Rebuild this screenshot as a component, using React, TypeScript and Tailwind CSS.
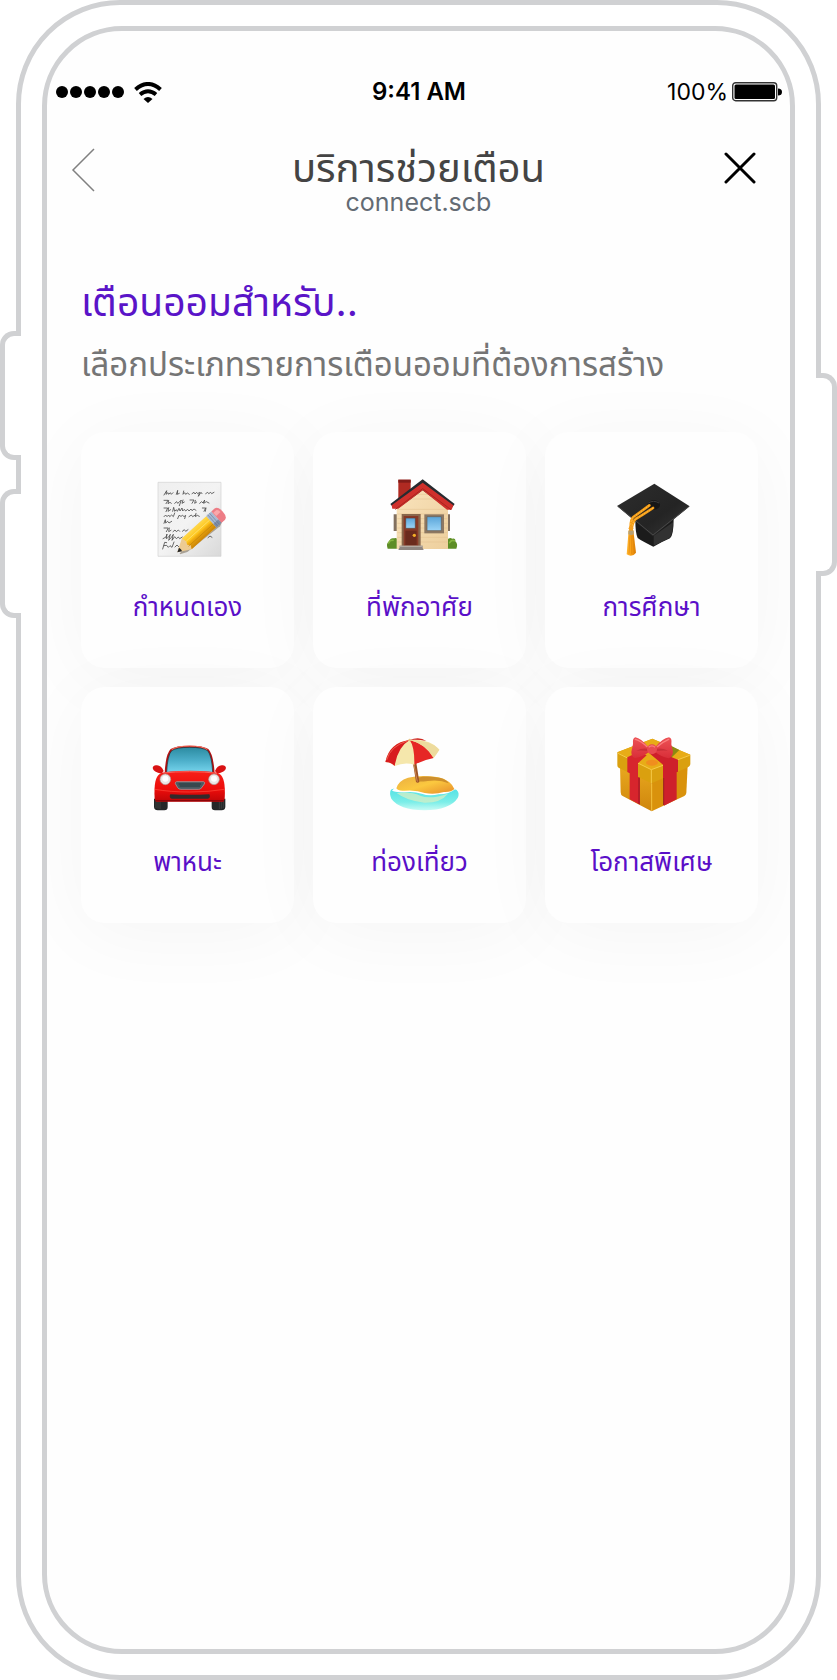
import type { ReactNode } from "react";

function NoteIcon() {
  return (
    <svg viewBox="9 30 270 270" className="size-[90px]" aria-hidden="true">
      <defs>
        <linearGradient id="paper" x1="0" y1="0" x2="1" y2="1">
          <stop offset="0" stopColor="#efefef" />
          <stop offset="0.5" stopColor="#f3f3f3" />
          <stop offset="1" stopColor="#d9d9d9" />
        </linearGradient>
        <linearGradient id="pencil" x1="0" y1="0" x2="0" y2="1">
          <stop offset="0" stopColor="#ffd84a" />
          <stop offset="0.45" stopColor="#fdc51d" />
          <stop offset="0.55" stopColor="#f0ac10" />
          <stop offset="1" stopColor="#c98306" />
        </linearGradient>
      </defs>
      <path d="M54 70H243V292H54Z" fill="url(#paper)" stroke="#d2d2d2" strokeWidth="2" />
      <g fill="none" stroke="#4c4c4c" strokeWidth="2.5" strokeLinecap="round" strokeLinejoin="round">
        <path d="M72 108l8-13-2 11 6-5 2 5 5-5 3 5 5-5M109 106l4-12-1 12 6-3M131 96l-2 10 5-5 3 5 5-4 6 4M156 104l6-4 3 5 5-5 3 4 6-4-4 12 8-12 3 4M197 104l6-4 3 4 6-4 3 4 7-4" />
        <path d="M72 124h12l-6 10M86 124l-2 10 6-4 4 3M104 133l6-5 3 5 5-4 6-6-6 17M129 123l-3 10 7-4M150 123h12l-6 10M166 124l-2 9 6-4M179 133l6-5 4 4 5-9-3 10 8-5 8 4" />
        <path d="M72 147h11l-5 11M86 146l-2 11 8-5M98 157l3-12 3 12 5-5 3 5 5-9 3 8 6-9 2 9 5-5 4 5 6-5 4 5 6-6 3 5 6-5 6 4M187 147h10l-5 10M198 147l-2 10" />
        <path d="M72 173l5-5 4 5 5-5 3 5 6-5 5 5 4-11M113 179l4-10 6 3 5-3 4 4 5-4-3 10M147 173l7-5 4 5 8-5M168 163l-2 10 6-4 6 3" />
        <path d="M72 193l4-11 1 10 6-5 4 5 8-5M72 207h13l-6 11M88 207l-2 11 7-4M99 218l6-5 4 5 6-5 4 4M127 217l6-5 4 5 7-5" />
        <path d="M69 239l9-5 3-9-2 14 7-5 5-8-5 18 9-10 5-8-4 18 8-11 5 6 6-5 4 5 8-5M204 236l6-5 6 4" />
        <path d="M68 270l6-20 6 1M72 260l8-1 5 6 5-5 6 5 6-16M105 264l6-6 5 5" />
      </g>
      <path d="M119 283L254 174l-14 28-98 77-22 7z" fill="#5b4a2c" opacity="0.45" />
      {/* pencil lies along its own axis, tip at the origin */}
      <g transform="translate(112 280) rotate(-42)">
        <path d="M0 0L38-22H137V22H38Z" fill="#edcb92" />
        <path d="M38-22H137V22H38L44 11 37 3 42-7Z" fill="url(#pencil)" />
        <path d="M42-7H137" stroke="#ffe680" strokeWidth="2" />
        <path d="M37 9H137" stroke="#c18209" strokeWidth="2" />
        <path d="M0 0L13-7Q16 0 13 7Z" fill="#272727" />
        <path d="M137-23H158V23H137Z" fill="#a8b9d1" />
        <path d="M143-23V23M150-23V23" stroke="#71839f" strokeWidth="2" />
        <path d="M137 9H158V23H137Z" fill="#63708a" opacity="0.6" />
        <path d="M158-23H171Q183-22 183 0T171 23H158Z" fill="#ed7d86" />
        <path d="M160-16H171Q177-14 177-3H160Z" fill="#fba8aa" />
      </g>
    </svg>
  );
}

function HouseIcon() {
  return (
    <svg viewBox="12 30 270 270" className="size-[90px]" aria-hidden="true">
      <defs>
        <linearGradient id="wall" x1="0" y1="0" x2="1" y2="1">
          <stop offset="0" stopColor="#fae4bd" />
          <stop offset="1" stopColor="#edcf9d" />
        </linearGradient>
        <linearGradient id="pane" x1="0" y1="0" x2="0" y2="1">
          <stop offset="0" stopColor="#5aa5d9" />
          <stop offset="1" stopColor="#9bd4f7" />
        </linearGradient>
      </defs>
      <path d="M68 166h12v50H68zM228 166h9v50h-9z" fill="#82705f" />
      <path d="M50 269q-6-16 5-22 3-12 15-9 10-3 13 8v23zM228 269v-23q4-13 16-7 10-2 9 8 9 8 3 22z" fill="#5d8d26" />
      <path d="M53 252q4-10 13-8M236 251q5-10 14-6" stroke="#86b641" strokeWidth="5" fill="none" strokeLinecap="round" />
      <path d="M82 62h37v44l-37 27z" fill="#b02a22" />
      <path d="M82 62h37v9H82z" fill="#821c19" />
      <path d="M77 137L155 78l76 60v132H77z" fill="url(#wall)" />
      <path d="M79 151H229M79 165H229M79 179H229M79 193H229M79 207H229M79 221H229M79 235H229M79 249H229M105 120H205M120 106H189" stroke="#e0bf8c" strokeWidth="1.5" />
      <path d="M58 135L155 61l96 74-7 10h-22L155 94 86 145H66z" fill="#272b30" />
      <path d="M62 139L155 71l92 68-5 13h-14L155 94 82 149H64z" fill="#cf302c" />
      <path d="M73 151l82-62 85 63" fill="none" stroke="#a8251f" strokeWidth="3" />
      <path d="M92 165h57v99H92z" fill="#89684d" />
      <path d="M98 171h44v93H98z" fill="#873a27" />
      <path d="M103 215h34v43h-34z" fill="#6b2b1d" />
      <path d="M104 177h29v31h-29z" fill="url(#pane)" stroke="#5e3e32" strokeWidth="2" />
      <circle cx="130" cy="229" r="5" fill="#f4ae27" />
      <path d="M160 166h59v57h-59z" fill="#8d7862" />
      <path d="M168 173h43v42h-43z" fill="url(#pane)" stroke="#675b50" strokeWidth="2" />
      <path d="M86 260h69v6l3 7H82l4-8z" fill="#8e8580" />
      <path d="M86 260h69v4H86z" fill="#b2a9a1" />
    </svg>
  );
}

function CapIcon() {
  return (
    <svg viewBox="18 30 270 270" className="size-[90px]" aria-hidden="true">
      <defs>
        <linearGradient id="board" x1="0" y1="0" x2="1" y2="1">
          <stop offset="0" stopColor="#2d2d2d" />
          <stop offset="0.6" stopColor="#242424" />
          <stop offset="1" stopColor="#383838" />
        </linearGradient>
        <linearGradient id="tassel" x1="0" y1="0" x2="1" y2="0">
          <stop offset="0" stopColor="#ffb52f" />
          <stop offset="0.5" stopColor="#f99f16" />
          <stop offset="1" stopColor="#db7c04" />
        </linearGradient>
      </defs>
      <path d="M103 184L218 180Q218 228 207 238 184 248 157 263 126 248 110 237 103 223 103 184Z" fill="#1b1b1b" />
      <path d="M158 230L216 190Q216 226 205 237L158 260Z" fill="#323232" />
      <path d="M48 141L160 74 266 142 156 232Z" fill="url(#board)" />
      <path d="M51 142L156 228 263 143" fill="none" stroke="#484848" strokeWidth="3" />
      <ellipse cx="158" cy="138" rx="19" ry="14" fill="#161616" />
      <path d="M142 132q15-10 32 0" stroke="#3c3c3c" strokeWidth="3" fill="none" />
      <path d="M145 139Q120 158 97 174 88 181 89 211M156 147Q125 168 104 180 95 187 91 214" fill="none" stroke="#f79d15" strokeWidth="8" strokeLinecap="round" />
      <path d="M145 139Q120 158 97 174 88 181 89 211M156 147Q125 168 104 180 95 187 91 214" fill="none" stroke="#ffc653" strokeWidth="3" strokeDasharray="4 5" />
      <path d="M83 214Q90 205 97 214L105 281Q93 297 77 286Z" fill="url(#tassel)" />
      <path d="M87 229L84 284M92 229V286M96 229L100 283" stroke="#d57e0a" strokeWidth="1.5" />
      <path d="M82 216q8-6 16 0v10q-8 5-16 0z" fill="#b9a173" />
      <circle cx="90" cy="208" r="7" fill="#f6a020" />
    </svg>
  );
}

function CarIcon() {
  return (
    <svg viewBox="9 0 270 270" className="size-[90px]" aria-hidden="true">
      <defs>
        <linearGradient id="body" x1="0" y1="0" x2="0" y2="1">
          <stop offset="0" stopColor="#f72019" />
          <stop offset="0.6" stopColor="#ed0d0b" />
          <stop offset="1" stopColor="#be0507" />
        </linearGradient>
        <linearGradient id="windshield" x1="0" y1="0" x2="0" y2="1">
          <stop offset="0" stopColor="#2c8ba1" />
          <stop offset="0.5" stopColor="#4badc8" />
          <stop offset="1" stopColor="#77d5ed" />
        </linearGradient>
      </defs>
      <path d="M42 224h41v25q0 10-10 10H53q-10 0-11-10zM215 224h41v25q-1 10-11 10h-20q-10 0-10-10z" fill="#242728" />
      <path d="M48 230v22M54 230v24M60 230v25M238 230v25M244 230v24M250 230v22" stroke="#454849" strokeWidth="2" />
      <path d="M38 132q2-10 13-8 13 1 20 17l-6 8q-25-4-27-17zM258 132q-2-10-13-8-13 1-20 17l6 8q25-4 27-17z" fill="#d91213" />
      <path d="M74 151Q76 91 92 75 107 65 149 65T205 75Q221 92 224 151Z" fill="#b40f10" />
      <path d="M80 146Q82 94 95 80 109 70 149 70T203 80Q216 96 218 146Z" fill="url(#windshield)" stroke="#252e31" strokeWidth="2" />
      <path d="M95 77Q111 66 149 66T202 77" fill="none" stroke="#f67664" strokeWidth="3" />
      <path d="M44 224Q40 160 60 149 77 140 149 140T238 149Q258 160 254 224L250 233H48Z" fill="url(#body)" />
      <path d="M70 147Q103 143 149 143T231 148" fill="none" stroke="#fc635b" strokeWidth="3" />
      <path d="M45 196Q91 204 149 204T253 196" fill="none" stroke="#ff4d3e" strokeWidth="2" />
      <circle cx="76" cy="166" r="16" fill="#e9e6e4" stroke="#ad9995" strokeWidth="2" />
      <circle cx="222" cy="166" r="16" fill="#e9e6e4" stroke="#ad9995" strokeWidth="2" />
      <circle cx="76" cy="164" r="9" fill="#fff" />
      <circle cx="222" cy="164" r="9" fill="#fff" />
      <path d="M110 173H190Q196 174 193 180L184 192Q182 196 176 196H123Q116 196 113 191L106 179Q105 174 110 173Z" fill="#4b5a61" stroke="#a5afb2" strokeWidth="2" />
      <path d="M116 180H183M119 186H180" stroke="#26363c" strokeWidth="3" />
      <path d="M91 211Q149 214 208 211 213 221 204 224H95Q86 221 91 211Z" fill="#332a2b" />
      <path d="M47 230H251" stroke="#8b0508" strokeWidth="4" />
    </svg>
  );
}

function BeachIcon() {
  return (
    <svg viewBox="12 0 270 270" className="size-[90px]" aria-hidden="true">
      <defs>
        <linearGradient id="sea" x1="0" y1="0" x2="0" y2="1">
          <stop offset="0" stopColor="#4ee0e5" />
          <stop offset="0.65" stopColor="#7beee8" />
          <stop offset="1" stopColor="#c9fbf5" />
        </linearGradient>
        <linearGradient id="sand" x1="0" y1="0" x2="1" y2="1">
          <stop offset="0" stopColor="#eaae42" />
          <stop offset="0.5" stopColor="#fbc83f" />
          <stop offset="1" stopColor="#e68c2a" />
        </linearGradient>
      </defs>
      <path d="M60 197Q76 187 160 188 235 187 257 198 267 207 260 222 237 258 160 259 84 257 61 224 54 207 60 197Z" fill="url(#sea)" />
      <path d="M77 207Q120 202 148 215 178 227 231 209 209 237 160 236 106 230 77 207Z" fill="#d4efc6" opacity="0.75" />
      <path d="M63 200Q72 190 76 187 89 162 125 158 163 149 207 160 240 168 253 195 235 211 203 211 174 217 152 209 128 202 101 205 75 205 63 200Z" fill="#fff" />
      <path d="M76 193Q82 170 111 161 151 151 203 160 239 169 250 195 241 205 219 204 190 213 161 207 136 197 101 200 81 202 76 193Z" fill="url(#sand)" />
      <path d="M140 161Q172 153 213 163 230 170 233 178 206 166 170 171 144 174 135 171Z" fill="#b77424" opacity="0.65" />
      <path d="M116 54L126 53 145 174Q140 178 135 174Z" fill="#9d5427" />
      <path d="M122 90L139 173" stroke="#ce8951" strokeWidth="3" />
      <path d="M43 114Q55 56 116 48 178 44 205 77 198 90 187 102 158 98 130 122 101 113 71 126 57 114 43 114Z" fill="#f5e7ac" />
      <path d="M43 114Q55 56 116 48 80 69 71 126 59 114 43 114Z" fill="#d81b1e" />
      <path d="M116 48Q131 68 130 122 160 107 188 102 164 60 116 48Z" fill="#e62725" />
      <path d="M116 48Q145 36 166 51 144 46 116 48Z" fill="#cf2720" />
      <path d="M116 48Q181 49 205 77L188 102Q162 58 116 48Z" fill="#eddb9d" />
      <path d="M47 108Q58 66 111 50" fill="none" stroke="#f05a4d" strokeWidth="3" />
      <circle cx="116" cy="48" r="4" fill="#e6c182" />
    </svg>
  );
}

function GiftIcon() {
  return (
    <svg viewBox="18 0 270 270" className="size-[90px]" aria-hidden="true">
      <defs>
        <linearGradient id="box" x1="0" y1="0" x2="0" y2="1">
          <stop offset="0" stopColor="#e9a91f" />
          <stop offset="1" stopColor="#cf860d" />
        </linearGradient>
        <linearGradient id="bow" x1="0" y1="0" x2="0" y2="1">
          <stop offset="0" stopColor="#ed5256" />
          <stop offset="1" stopColor="#d92e38" />
        </linearGradient>
      </defs>
      <path d="M57 124L152 169V262L65 216Q59 213 59 205Z" fill="url(#box)" />
      <path d="M152 169L260 124 256 207Q255 213 250 216L152 262Z" fill="#d9920c" />
      <path d="M49 85L154 44 268 92V121Q267 127 261 130L152 178 54 132Q49 130 49 124Z" fill="#daa00f" />
      <path d="M49 85L154 44 268 92 151 138Z" fill="#e8ac17" />
      <path d="M190 55L235 78 204 108 171 91Z" fill="#8d8912" />
      <path d="M151 138V177M51 88L151 137 266 94" fill="none" stroke="#f6ca49" strokeWidth="3" />
      <path d="M152 179V259" stroke="#f2bd35" strokeWidth="3" />
      <path d="M79 100L114 83 137 94 111 118V159L117 163V242L86 226V148L79 144Z" fill="#d7252d" />
      <path d="M145 88L172 83 231 107V143L227 145V226L189 245V162L186 163V122Z" fill="#ce202b" />
      <path d="M114 160V240M188 162V243" stroke="#971922" strokeWidth="3" />
      <ellipse cx="153" cy="116" rx="18" ry="9" fill="#f18720" opacity="0.8" />
      <path d="M144 71Q119 42 103 40 94 42 96 60L91 84Q91 99 102 102 125 99 145 83ZM161 71Q184 43 204 40 214 42 211 61L216 83Q215 99 203 103 180 99 160 82Z" fill="url(#bow)" />
      <path d="M144 75Q125 70 106 80 125 79 144 81M162 75Q181 70 201 80 182 79 163 81" fill="#b92831" opacity="0.6" />
      <path d="M103 46Q120 51 138 68M203 46Q186 53 169 68" fill="none" stroke="#fb7e7c" strokeWidth="4" strokeLinecap="round" />
      <ellipse cx="153" cy="76" rx="15" ry="15" fill="#e74b50" />
      <path d="M143 70Q153 61 162 70" fill="none" stroke="#fb7d7c" strokeWidth="4" />
    </svg>
  );
}

type Category = {
  label: string;
  icon: ReactNode;
};

const categories: Category[] = [
  { label: "กำหนดเอง", icon: <NoteIcon /> },
  { label: "ที่พักอาศัย", icon: <HouseIcon /> },
  { label: "การศึกษา", icon: <CapIcon /> },
  { label: "พาหนะ", icon: <CarIcon /> },
  { label: "ท่องเที่ยว", icon: <BeachIcon /> },
  { label: "โอกาสพิเศษ", icon: <GiftIcon /> },
];

function StatusBar() {
  return (
    <div className="grid grid-cols-3 items-center text-2xl leading-8 text-black">
      <div className="flex items-center gap-2">
        <svg viewBox="0 0 70 12" className="h-3 w-[70px]" aria-hidden="true">
          <circle cx="6" cy="6" r="6" />
          <circle cx="20" cy="6" r="6" />
          <circle cx="34" cy="6" r="6" />
          <circle cx="48" cy="6" r="6" />
          <circle cx="62" cy="6" r="6" />
        </svg>
        <svg viewBox="0 0 28 21" className="h-[21px] w-7" aria-hidden="true">
          <path d="M1.5 7.5Q14-3.5 26.5 7.5" fill="none" stroke="#000" strokeWidth="4" />
          <path d="M6 12.5Q14 6 22 12.5" fill="none" stroke="#000" strokeWidth="4" />
          <path d="M9.5 17Q14 13 18.5 17L14 21Z" />
        </svg>
      </div>
      <p className="text-center font-semibold">9:41 AM</p>
      <div className="flex items-center justify-end gap-1">
        <span className="text-[23px]">100%</span>
        <svg viewBox="0 0 50 20" className="h-5 w-[50px]" aria-hidden="true">
          <rect x="0.7" y="0.7" width="44" height="18" rx="3" fill="none" stroke="#333" strokeWidth="1.4" />
          <rect x="2.5" y="2.5" width="40.5" height="14.5" rx="1.5" />
          <path d="M46 6.5q4 0 4 3.5t-4 3.5z" />
        </svg>
      </div>
    </div>
  );
}

export default function App() {
  return (
    <div className="min-h-screen bg-white px-4 font-['Inter','Noto_Sans_Thai',sans-serif] flex">
      <div className="relative flex grow rounded-[104px] border-5 border-[#d0d1d3] p-[21px]">
        {/* side buttons sit over the outer border */}
        <div className="absolute top-[326px] -left-[21px] h-[129px] w-[21px] rounded-l-[14px] border-5 border-r-0 border-[#d0d1d3] bg-white" />
        <div className="absolute top-[484px] -left-[21px] h-[129px] w-[21px] rounded-l-[14px] border-5 border-r-0 border-[#d0d1d3] bg-white" />
        <div className="absolute top-[368px] -right-[21px] h-[203px] w-[21px] rounded-r-[14px] border-5 border-l-0 border-[#d0d1d3] bg-white" />

        <main className="grow overflow-hidden rounded-[80px] border-5 border-[#d0d1d3] bg-[#fefefe]">
          <div className="pt-[45px] pl-[9px] pr-2">
            <StatusBar />
          </div>

          <header className="mt-6 grid grid-cols-[1fr_auto_1fr] items-start px-6">
            <button type="button" aria-label="ย้อนกลับ" className="mt-4 justify-self-start">
              <svg viewBox="0 0 24 44" className="h-11 w-6" fill="none" stroke="#808080" strokeWidth="1.5" aria-hidden="true">
                <path d="M23 1L2 22l21 21" />
              </svg>
            </button>
            <div className="pt-4 text-center">
              <h1 className="text-[40px] leading-10 text-[#444]">บริการช่วยเตือน</h1>
              <p className="text-[25px] leading-7 text-[#636b74]">connect.scb</p>
            </div>
            <button type="button" aria-label="ปิด" className="mt-5 mr-2.5 justify-self-end">
              <svg viewBox="0 0 32 32" className="size-8" fill="none" stroke="#000" strokeWidth="3" strokeLinecap="round" aria-hidden="true">
                <path d="M2 2l28 28M30 2L2 30" />
              </svg>
            </button>
          </header>

          <section className="mt-14 pr-8 pl-[34px]">
            <h2 className="text-[39px] leading-[60px] text-[#5a14c8]">เตือนออมสำหรับ..</h2>
            <p className="text-[33px] leading-16 text-[#757575]">เลือกประเภทรายการเตือนออมที่ต้องการสร้าง</p>

            <div className="mt-9 grid grid-cols-3 gap-[19px]">
              {categories.map((category) => (
                <button
                  key={category.label}
                  type="button"
                  className="flex h-[236px] flex-col items-center rounded-3xl bg-[#fefefe] pt-[37px] shadow-[0_10px_80px_rgba(0,0,0,0.04)]"
                >
                  {category.icon}
                  <span className="mt-7 text-[26px] leading-10 text-[#5a0fc8]">{category.label}</span>
                </button>
              ))}
            </div>
          </section>
        </main>
      </div>
    </div>
  );
}
